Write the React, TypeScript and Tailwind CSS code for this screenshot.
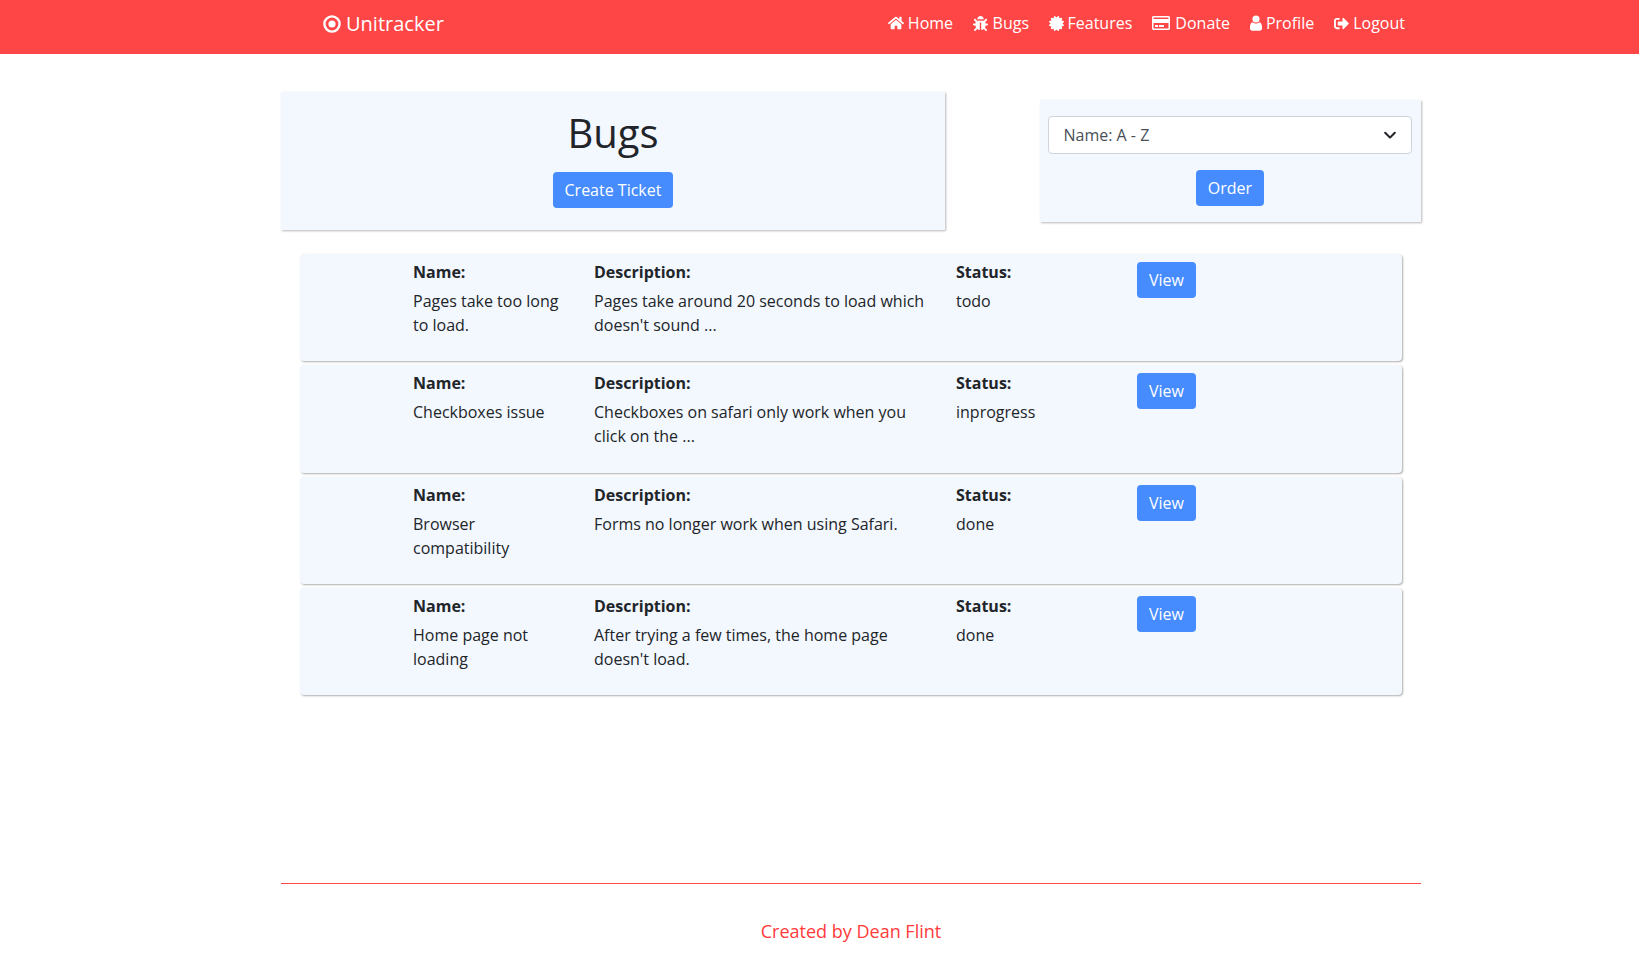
import React from "react";
import { FaHome, FaBug, FaCertificate, FaRegCreditCard, FaSignOutAlt } from "react-icons/fa";

function DotCircle() {
  return (
    <svg width="18" height="18" viewBox="0 0 18 18" fill="none">
      <circle cx="9" cy="9" r="7.6" stroke="white" strokeWidth="2.4" />
      <circle cx="9" cy="9" r="3.6" fill="white" />
    </svg>
  );
}

function UserIcon() {
  return (
    <svg width="12" height="16" viewBox="0 0 12 16" fill="white">
      <circle cx="6" cy="4" r="3.6" />
      <path d="M2.6 7.2C3.5 8 4.7 8.5 6 8.5s2.5-.5 3.4-1.3C11 7.5 12 9.2 12 12v1.5c0 1.2-.9 2.2-2.2 2.2H2.2C.9 15.7 0 14.7 0 13.5V12c0-2.8 1-4.5 2.6-4.8z" />
    </svg>
  );
}

const nav = [
  { label: "Home", icon: <FaHome size={16} />, gap: "gap-[4px]" },
  { label: "Bugs", icon: <FaBug size={15} />, gap: "gap-[4.5px]" },
  { label: "Features", icon: <FaCertificate size={15} />, gap: "gap-[3.5px]" },
  { label: "Donate", icon: <FaRegCreditCard size={18} />, gap: "gap-[5px]" },
  { label: "Profile", icon: <UserIcon />, gap: "gap-[4px]" },
  { label: "Logout", icon: <FaSignOutAlt size={15} />, gap: "gap-[4px]" },
];

const tickets = [
  { name: "Pages take too long to load.", desc: "Pages take around 20 seconds to load which doesn't sound ...", status: "todo" },
  { name: "Checkboxes issue", desc: "Checkboxes on safari only work when you click on the ...", status: "inprogress" },
  { name: "Browser compatibility", desc: "Forms no longer work when using Safari.", status: "done" },
  { name: "Home page not loading", desc: "After trying a few times, the home page doesn't load.", status: "done" },
];

function Btn({ children }: { children: React.ReactNode }) {
  return (
    <button className="h-[36px] px-[12px] rounded-[4px] bg-[#468cff] text-white text-base leading-6">{children}</button>
  );
}

export default function App() {
  return (
    <div className="min-h-[953px] bg-white text-[#212529] text-base leading-6 font-['Open_Sans',sans-serif]">
      <nav className="h-[54px] bg-[#ff4646] text-white flex">
        <div className="w-[1140px] ml-[281px] pl-[42px] pr-[16px] pb-[6px] flex items-center justify-between">
          <div className="flex items-center gap-[5px] text-xl leading-[30px]">
            <DotCircle />
            <span>Unitracker</span>
          </div>
          <div className="flex items-center gap-[20px] mb-[2px]">
            {nav.map((n) => (
              <div key={n.label} className={`flex items-center ${n.gap}`}>
                {n.icon}
                <span>{n.label}</span>
              </div>
            ))}
          </div>
        </div>
      </nav>

      <main className="w-[1140px] ml-[281px]">
        <div className="flex items-start justify-between pt-[38px]">
          <div className="w-[664px] h-[138px] bg-[#f3f7fe] shadow-[1px_1px_2px_rgba(0,0,0,0.28)] flex flex-col items-center pt-[17px]">
            <h1 className="text-[40px] leading-[48px] font-normal">Bugs</h1>
            <div className="mt-[15px]"><Btn>Create Ticket</Btn></div>
          </div>
          <div className="w-[381px] h-[122px] mt-[8px] bg-[#f3f7fe] shadow-[1px_1px_2px_rgba(0,0,0,0.28)] flex flex-col items-center pt-[16px] pl-[8px] pr-[9px]">
            <div className="w-full h-[38px] bg-white border border-[#ced4da] rounded-[4px] pl-[14.5px] pr-[14px] flex items-center justify-between text-[#495057]">
              <span>Name: A - Z</span>
              <svg width="14" height="14" viewBox="0 0 16 16" fill="none" stroke="#212529" strokeWidth="2.4" strokeLinecap="round" strokeLinejoin="round"><path d="M2.5 5.5 8 11l5.5-5.5" /></svg>
            </div>
            <div className="mt-[16px]"><Btn>Order</Btn></div>
          </div>
        </div>

        <div className="ml-[19px] mr-[19px] mt-[24px] flex flex-col gap-[4px]">
          {tickets.map((t) => (
            <div key={t.name} className="h-[107.33px] bg-[#f3f7fe] rounded-[4px] shadow-[1px_1px_2px_rgba(0,0,0,0.32)] flex pl-[113px] pt-[6px]">
              <div className="w-[181px] pr-[24px]">
                <div className="font-bold">Name:</div>
                <div className="mt-[4.9px]">{t.name}</div>
              </div>
              <div className="w-[362px] pr-[24px]">
                <div className="font-bold">Description:</div>
                <div className="mt-[4.9px]">{t.desc}</div>
              </div>
              <div className="w-[181px]">
                <div className="font-bold">Status:</div>
                <div className="mt-[4.9px]">{t.status}</div>
              </div>
              <div className="mt-[2px]"><Btn>View</Btn></div>
            </div>
          ))}
        </div>

        <footer className="mt-[188px] border-t border-[#ff4646] pt-[34px] text-center text-[#ff3b3b] text-lg leading-[27px]">
          Created by Dean Flint
        </footer>
      </main>
    </div>
  );
}
